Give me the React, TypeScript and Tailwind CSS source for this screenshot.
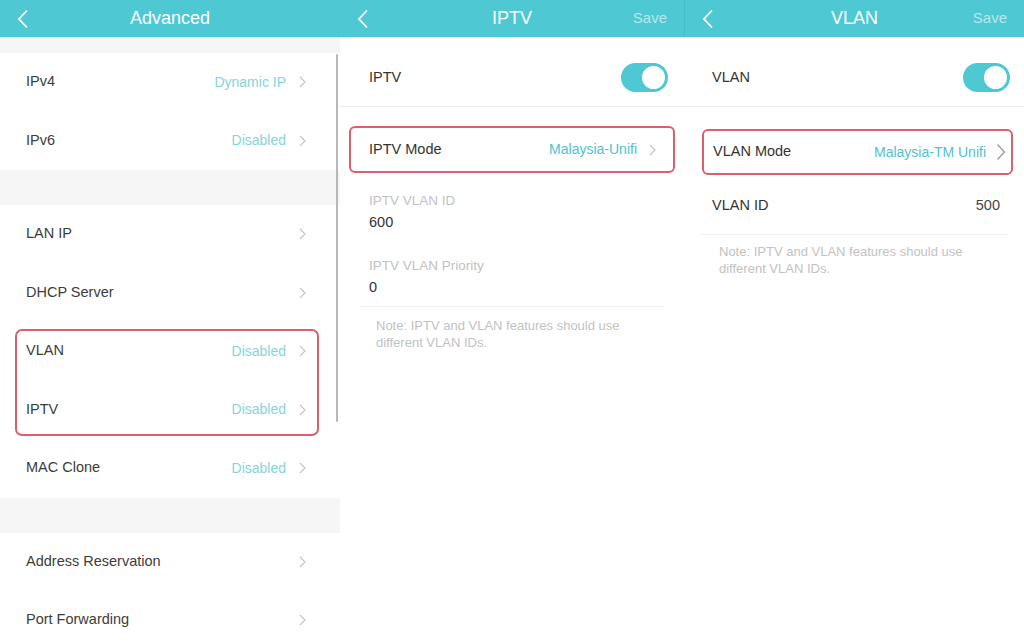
import React from "react";

const font = { fontFamily: '"Liberation Sans", "Noto Sans", Arial, sans-serif' };

function Chevron({ big = false }: { big?: boolean }) {
    return big ? (
        <svg width="10" height="18" viewBox="0 0 10 18" className="shrink-0">
            <path d="M1.5 1.5 L8.5 9 L1.5 16.5" fill="none" stroke="#9a9a9a" strokeWidth="1.3" />
        </svg>
    ) : (
        <svg width="7" height="12" viewBox="0 0 7 12" className="shrink-0">
            <path d="M1 1 L6 6 L1 11" fill="none" stroke="#c4c4c4" strokeWidth="1.1" />
        </svg>
    );
}

function BackArrow() {
    return (
        <svg width="12" height="20" viewBox="0 0 12 20" className="shrink-0">
            <path d="M10 1.5 L2 10 L10 18.5" fill="none" stroke="#ffffff" strokeWidth="1.8" />
        </svg>
    );
}

function Header({ title, save }: { title: string; save?: boolean }) {
    return (
        <div className="h-[37px] shrink-0 bg-[#4ec8d3] flex items-center px-[17px]">
            <div className="w-[36px] flex">
                <BackArrow />
            </div>
            <div className="flex-1 text-center text-white text-[18px]">{title}</div>
            <div className="w-[36px] text-right text-[15px] text-white/60">{save ? "Save" : ""}</div>
        </div>
    );
}

function Toggle() {
    return (
        <div className="w-[47px] h-[29px] rounded-full bg-[#4ec8d3] flex items-center justify-end pr-[1px]">
            <div className="w-[27px] h-[27px] rounded-full bg-white border-[2px] border-[#4ec8d3]" />
        </div>
    );
}

function MenuRow({ label, value }: { label: string; value?: string }) {
    return (
        <div className="h-[58.5px] shrink-0 flex items-center pl-[26px] pr-[34px]">
            <span className="flex-1 text-[14.5px] text-[#3c3c3c]">{label}</span>
            {value && <span className="text-[14px] text-[#86d4da] mr-[13px]">{value}</span>}
            <Chevron />
        </div>
    );
}

export default function App() {
    return (
        <div style={font} className="w-[1024px] h-[642px] flex overflow-hidden bg-white">
            {/* Advanced */}
            <div className="w-[340px] h-full flex flex-col bg-white overflow-hidden">
                <Header title="Advanced" />
                <div className="flex-1 flex relative">
                    <div className="flex-1 flex flex-col">
                        <div className="h-[16px] shrink-0 bg-[#f6f6f6]" />
                        <MenuRow label="IPv4" value="Dynamic IP" />
                        <MenuRow label="IPv6" value="Disabled" />
                        <div className="h-[35px] shrink-0 bg-[#f6f6f6]" />
                        <MenuRow label="LAN IP" />
                        <MenuRow label="DHCP Server" />
                        <div className="relative shrink-0">
                            <MenuRow label="VLAN" value="Disabled" />
                            <MenuRow label="IPTV" value="Disabled" />
                            <div className="absolute left-[15px] w-[304px] top-[7px] h-[107px] border-2 border-[#d9606c] rounded-[7px]" />
                        </div>
                        <MenuRow label="MAC Clone" value="Disabled" />
                        <div className="h-[35px] shrink-0 bg-[#f6f6f6]" />
                        <MenuRow label="Address Reservation" />
                        <MenuRow label="Port Forwarding" />
                    </div>
                    <div className="absolute right-[2px] top-[17px] w-[2px] h-[368px] bg-[#b8b8b8] rounded-full" />
                </div>
            </div>

            {/* IPTV */}
            <div className="w-[344px] flex flex-col bg-white">
                <Header title="IPTV" save />
                <div className="mt-[12px] h-[58px] flex items-center pl-[29px] pr-[16px] border-b border-[#ececec]">
                    <span className="flex-1 text-[14.5px] text-[#333]">IPTV</span>
                    <Toggle />
                </div>
                <div className="px-[9px] pt-[19px]">
                    <div className="h-[47px] border-2 border-[#d9606c] rounded-[6px] flex items-center pl-[18px] pr-[17px]">
                        <span className="flex-1 text-[14.5px] text-[#333]">IPTV Mode</span>
                        <span className="text-[14px] text-[#4fc3cf] mr-[12px]">Malaysia-Unifi</span>
                        <Chevron />
                    </div>
                </div>
                <div className="mx-[20px] border-b border-[#f0f0f0] pt-[20px] pb-[10px] pl-[9px]">
                    <div className="text-[13.5px] text-[#c2c2c2] leading-[16px]">IPTV VLAN ID</div>
                    <div className="text-[14.5px] text-[#333] leading-[18px] mt-[4px]">600</div>
                    <div className="text-[13.5px] text-[#c2c2c2] leading-[16px] mt-[27px]">IPTV VLAN Priority</div>
                    <div className="text-[14.5px] text-[#333] leading-[18px] mt-[4px]">0</div>
                </div>
                <div className="pl-[36px] pr-[24px] pt-[10px] text-[13px] leading-[17px] text-[#c2c2c2]">
                    Note: IPTV and VLAN features should use different VLAN IDs.
                </div>
            </div>

            {/* VLAN */}
            <div className="flex-1 flex flex-col bg-white">
                <div className="border-l border-[#45bcc7]">
                    <Header title="VLAN" save />
                </div>
                <div className="mt-[12px] h-[58px] flex items-center pl-[28px] pr-[14px] border-b border-[#ececec]">
                    <span className="flex-1 text-[14.5px] text-[#333]">VLAN</span>
                    <Toggle />
                </div>
                <div className="pl-[18px] pr-[11px] pt-[22px]">
                    <div className="h-[46px] border-2 border-[#d9606c] rounded-[6px] flex items-center pl-[9px] pr-[5px]">
                        <span className="flex-1 text-[14.5px] text-[#333]">VLAN Mode</span>
                        <span className="text-[14px] text-[#4fc3cf] mr-[10px]">Malaysia-TM Unifi</span>
                        <Chevron big />
                    </div>
                </div>
                <div className="mx-[16px] h-[60px] flex items-center pt-[2px] pl-[12px] pr-[8px] border-b border-[#f0f0f0]">
                    <span className="flex-1 text-[14.5px] text-[#333]">VLAN ID</span>
                    <span className="text-[14.5px] text-[#444]">500</span>
                </div>
                <div className="pl-[35px] pr-[24px] pt-[8px] text-[13px] leading-[17px] text-[#c2c2c2]">
                    Note: IPTV and VLAN features should use different VLAN IDs.
                </div>
            </div>
        </div>
    );
}
